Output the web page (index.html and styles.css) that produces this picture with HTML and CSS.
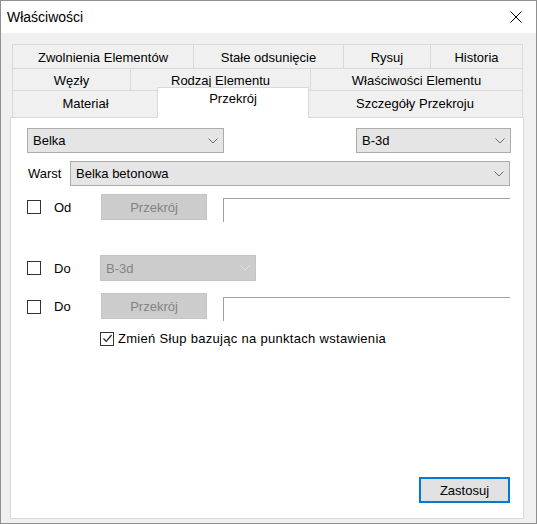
FILE: index.html
```html
<!DOCTYPE html>
<html lang="pl">
<head>
    <meta charset="UTF-8">
    <title>Właściwości</title>
    <link rel="stylesheet" href="styles.css">
</head>
<body>
    <div class="window">
        <div class="titlebar">
            <span class="title">Właściwości</span>
            <svg class="close" width="12" height="12" viewBox="0 0 12 12">
                <path d="M0.5 0.5 L11.5 11.5 M11.5 0.5 L0.5 11.5" stroke="#000" stroke-width="1" fill="none"/>
            </svg>
        </div>

        <div class="client">
            <div class="tabs">
                <div class="tab-row row1">
                    <div class="tab">Zwolnienia Elementów</div>
                    <div class="tab">Stałe odsunięcie</div>
                    <div class="tab">Rysuj</div>
                    <div class="tab last">Historia</div>
                </div>
                <div class="tab-row row2">
                    <div class="tab">Węzły</div>
                    <div class="tab">Rodzaj Elementu</div>
                    <div class="tab last">Właściwości Elementu</div>
                </div>
                <div class="tab-row row3">
                    <div class="tab">Materiał</div>
                    <div class="tab selected">Przekrój</div>
                    <div class="tab last">Szczegóły Przekroju</div>
                </div>
            </div>

            <div class="panel">
                <div class="line line-a">
                    <div class="combo combo-type">
                        <span>Belka</span>
                        <svg class="chev" width="10" height="6" viewBox="0 0 10 6"><path d="M0.5 0.5 L5 5 L9.5 0.5" stroke="#6a6a6a" fill="none"/></svg>
                    </div>
                    <div class="combo combo-sec">
                        <span>B-3d</span>
                        <svg class="chev" width="10" height="6" viewBox="0 0 10 6"><path d="M0.5 0.5 L5 5 L9.5 0.5" stroke="#6a6a6a" fill="none"/></svg>
                    </div>
                </div>

                <div class="line line-b">
                    <span class="label">Warst</span>
                    <div class="combo combo-layer">
                        <span>Belka betonowa</span>
                        <svg class="chev" width="10" height="6" viewBox="0 0 10 6"><path d="M0.5 0.5 L5 5 L9.5 0.5" stroke="#6a6a6a" fill="none"/></svg>
                    </div>
                </div>

                <div class="line line-c">
                    <span class="check"></span>
                    <span class="check-label">Od</span>
                    <div class="btn disabled">Przekrój</div>
                    <div class="edit"></div>
                </div>

                <div class="line line-d">
                    <span class="check"></span>
                    <span class="check-label">Do</span>
                    <div class="combo combo-off">
                        <span>B-3d</span>
                        <svg class="chev" width="10" height="6" viewBox="0 0 10 6"><path d="M0.5 0.5 L5 5 L9.5 0.5" stroke="#e2e2e2" fill="none"/></svg>
                    </div>
                </div>

                <div class="line line-e">
                    <span class="check"></span>
                    <span class="check-label">Do</span>
                    <div class="btn disabled">Przekrój</div>
                    <div class="edit"></div>
                </div>

                <div class="line line-f">
                    <span class="check checked">
                        <svg width="11" height="11" viewBox="0 0 11 11"><path d="M1.5 5.5 L4.2 8.3 L9.6 2" stroke="#222" stroke-width="1.2" fill="none"/></svg>
                    </span>
                    <span class="check-text">Zmień Słup bazując na punktach wstawienia</span>
                </div>

                <div class="btn apply">Zastosuj</div>
            </div>
        </div>
    </div>
</body>
</html>
```

FILE: styles.css
```css
body {
    margin: 0;
    font-family: "Liberation Sans", Arial, sans-serif;
    font-size: 13px;
    color: #000;
    background: #fff;
}

.window {
    width: 537px;
    height: 524px;
    box-sizing: border-box;
    border: 1px solid #8f8f8f;
    background: #f0f0f0;
    display: flex;
    flex-direction: column;
}

/* title bar */
.titlebar {
    height: 32px;
    flex: none;
    background: #fff;
    display: flex;
    align-items: center;
    justify-content: space-between;
    padding: 0 14px 0 6px;
}

.title {
    font-size: 14px;
}

/* client area */
.client {
    flex: 1;
    display: flex;
    flex-direction: column;
    padding: 11px 12px 4px 9px;
}

.tabs {
    margin-left: 2px;
}

.tab-row {
    display: grid;
}

.row1 {
    grid-template-columns: 181px 150px 87px 93px;
    height: 24px;
}

.row2 {
    grid-template-columns: 118px 180px 213px;
    height: 22px;
}

.row3 {
    grid-template-columns: 146px 149px 216px;
    height: 27px;
}

.tab {
    border-top: 1px solid #d9d9d9;
    border-left: 1px solid #d9d9d9;
    background: #f0f0f0;
    display: flex;
    justify-content: center;
    align-items: center;
    padding-top: 1px;
}

.tab.last {
    border-right: 1px solid #d9d9d9;
}

.row3 .tab {
    align-items: flex-start;
    padding-top: 5px;
}

.tab.selected {
    position: relative;
    z-index: 1;
    background: #fff;
    margin: -3px -2px -1px -1px;
    border-right: 1px solid #d9d9d9;
    padding-top: 3px;
}

/* page */
.panel {
    flex: 1;
    background: #fff;
    border: 1px solid #d9d9d9;
    display: flex;
    flex-direction: column;
    padding: 10px 12px 15px 16px;
}

.line {
    display: flex;
    align-items: center;
}

.line > * {
    flex: none;
}

.line-b {
    margin-top: 8px;
}

.line-c {
    margin-top: 8px;
    align-items: flex-start;
}

.line-d {
    margin-top: 33px;
}

.line-e {
    margin-top: 12px;
    align-items: flex-start;
}

.line-f {
    margin-top: 10px;
    padding-left: 73px;
}

/* combos */
.combo {
    box-sizing: border-box;
    height: 25px;
    background: #e5e5e5;
    border: 1px solid #acacac;
    display: flex;
    align-items: center;
    justify-content: space-between;
    padding: 0 5px 0 5px;
}

.chev {
    display: block;
}

.combo-type {
    width: 197px;
}

.combo-sec {
    width: 155px;
    margin-left: auto;
}

.label {
    width: 42px;
    margin-left: 1px;
}

.combo-layer {
    width: 440px;
}

.combo-off {
    width: 156px;
    height: 26px;
    background: #cccccc;
    border-color: #c4c4c4;
    color: #838383;
}

/* checkboxes */
.check {
    box-sizing: border-box;
    width: 14px;
    height: 14px;
    border: 1px solid #333;
    background: #fff;
    display: flex;
    align-items: center;
    justify-content: center;
}

.line-c .check {
    margin-top: 6px;
}

.line-e .check {
    margin-top: 7px;
}

.check-label {
    margin-left: 13px;
    width: 46px;
}

.line-c .check-label,
.line-e .check-label {
    margin-top: 6px;
    width: 47px;
}

.check-text {
    margin-left: 4px;
    letter-spacing: 0.3px;
}

/* buttons */
.btn {
    box-sizing: border-box;
    height: 26px;
    display: flex;
    align-items: center;
    justify-content: center;
}

.btn.disabled {
    width: 106px;
    background: #cccccc;
    border: 1px solid #c4c4c4;
    color: #838383;
}

.edit {
    box-sizing: border-box;
    width: 287px;
    height: 24px;
    margin-left: 16px;
    margin-top: 4px;
    border-top: 1px solid #a0a0a0;
    border-left: 1px solid #a0a0a0;
}

.apply {
    width: 91px;
    margin-top: auto;
    align-self: flex-end;
    margin-right: 1px;
    background: #e1e1e1;
    border: 2px solid #0078d7;
}
```
